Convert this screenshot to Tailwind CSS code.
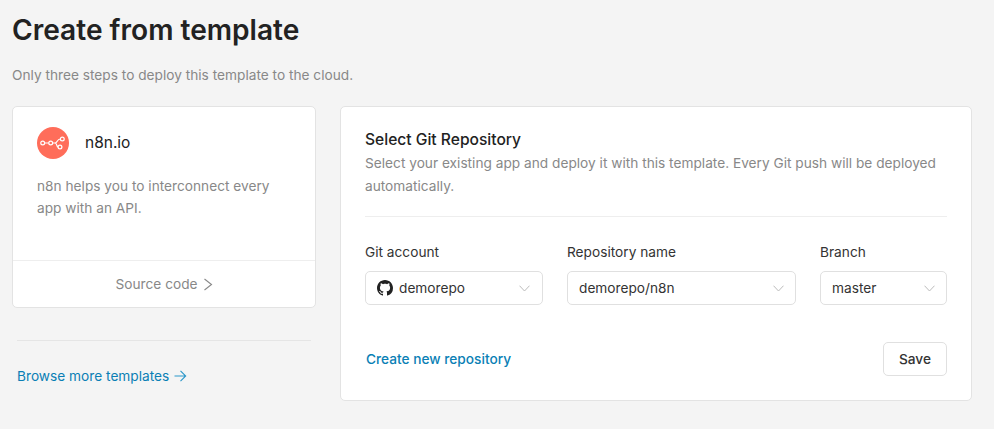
<!DOCTYPE html>
<html>
<head>
<meta charset="utf-8">
<script src="https://cdn.jsdelivr.net/npm/@tailwindcss/browser@4"></script>
</head>
<body class="bg-[#f4f4f4] font-['Inter',sans-serif] w-[994px] h-[429px] overflow-hidden text-[#222]">
<div class="px-3 pt-[12px]">
  <h1 class="text-[28.100px] leading-[36px] font-semibold text-[#222]">Create from template</h1>
  <p class="mt-[17px] text-[13.7px] leading-[20px] text-[#888]">Only three steps to deploy this template to the cloud.</p>
  <div class="flex items-start gap-6 mt-[21px]">
    <div class="w-[304px] shrink-0">
      <div class="bg-white border border-[#e3e3e3] rounded-[5px] h-[202px] flex flex-col">
        <div class="flex-1 px-6 pt-5">
          <div class="flex items-center gap-4">
            <span class="w-8 h-8 rounded-full bg-[#ff6d5a] flex items-center justify-center">
              <svg width="28" height="28" viewBox="0 0 28 28" fill="none" stroke="#fff" stroke-width="1.2"><circle cx="3.700" cy="14" r="1.900"/><circle cx="11.700" cy="14" r="1.900"/><circle cx="23.300" cy="10" r="1.900"/><circle cx="21" cy="18" r="1.900"/><path d="M5.600 14h4.200M13.600 14h2.400c2.800 0 1.600-4 5.400-4M16 14c2.300 0 1.400 4 3.100 4"/></svg>
            </span>
            <span class="text-[15.500px] font-normal text-[#222]">n8n.io</span>
          </div>
          <p class="mt-4 text-[13.7px] leading-[22px] text-[#888]">n8n helps you to interconnect every app with an API.</p>
        </div>
        <div class="h-[47px] pt-px border-t border-[#eee] flex items-center justify-center gap-[5px] text-[13.7px] text-[#888]">
          <span>Source code</span>
          <svg width="10" height="14" viewBox="0 0 10 14" fill="none" stroke="#888" stroke-width="1.100"><path d="M1.500 1 8.500 6.500l-7 5.500"/></svg>
        </div>
      </div>
      <div class="mx-[5px] mt-[32px] border-t border-[#e5e5e5] pt-[25px] flex items-center gap-[5px] text-[13.7px] leading-[20px] text-[#0a7fb5]">
        <span>Browse more templates</span>
        <svg width="13" height="12" viewBox="0 0 13 12" fill="none" stroke="#2b97c9" stroke-width="1.100"><path d="M0.500 6h11M6.500 0.800 11.700 6l-5.200 5.200"/></svg>
      </div>
    </div>
    <div class="w-[632px] h-[295px] bg-white border border-[#e3e3e3] rounded-[5px] px-6 pt-[23px]">
      <h2 class="text-[15.600px] leading-[20px] font-medium text-[#222]">Select Git Repository</h2>
      <p class="mt-[2px] text-[13.7px] leading-[23px] text-[#888]">Select your existing app and deploy it with this template. Every Git push will be deployed automatically.</p>
      <div class="mt-[18px] border-t border-[#eee] pt-[26px] flex gap-6">
        <div class="w-[178px]">
          <div class="text-[13.7px] leading-[18px] text-[#333]">Git account</div>
          <div class="mt-[10px] h-[34px] border border-[#e0e0e0] rounded-[5px] px-[11px] flex items-center gap-[6px] text-[13.7px] text-[#333]">
            <svg width="16" height="16" viewBox="0 0 16 16" fill="#222"><path d="M8 0C3.580 0 0 3.580 0 8c0 3.540 2.290 6.530 5.470 7.590.4.070.55-.17.55-.38 0-.19-.01-.82-.01-1.490-2.010.37-2.530-.49-2.690-.94-.09-.23-.48-.94-.82-1.130-.28-.15-.68-.52-.01-.53.63-.01 1.080.58 1.230.82.720 1.210 1.870.87 2.330.66.070-.52.280-.87.510-1.070-1.780-.2-3.640-.89-3.640-3.950 0-.87.310-1.590.820-2.150-.08-.2-.36-1.020.08-2.120 0 0 .67-.21 2.200.82.640-.18 1.320-.27 2-.27s1.360.09 2 .27c1.530-1.040 2.200-.82 2.200-.82.440 1.100.16 1.920.08 2.120.51.560.82 1.270.82 2.150 0 3.070-1.870 3.750-3.650 3.950.29.25.54.73.54 1.480 0 1.070-.01 1.930-.01 2.200 0 .21.15.46.55.38A8.010 8.010 0 0 0 16 8c0-4.420-3.580-8-8-8z"/></svg>
            <span class="flex-1">demorepo</span>
            <svg class="mr-px" width="11" height="7" viewBox="0 0 11 7" fill="none" stroke="#bbb" stroke-width="1"><path d="M.5.700 5.500 6l5-5.300"/></svg>
          </div>
        </div>
        <div class="w-[229px]">
          <div class="text-[13.7px] leading-[18px] text-[#333]">Repository name</div>
          <div class="mt-[10px] h-[34px] border border-[#e0e0e0] rounded-[5px] px-[11px] flex items-center text-[13.7px] text-[#333]">
            <span class="flex-1">demorepo/n8n</span>
            <svg width="11" height="7" viewBox="0 0 11 7" fill="none" stroke="#bbb" stroke-width="1"><path d="M.5.700 5.500 6l5-5.300"/></svg>
          </div>
        </div>
        <div class="w-[127px]">
          <div class="text-[13.7px] leading-[18px] text-[#333]">Branch</div>
          <div class="mt-[10px] h-[34px] border border-[#e0e0e0] rounded-[5px] px-[11px] flex items-center text-[13.7px] text-[#333]">
            <span class="flex-1">master</span>
            <svg width="11" height="7" viewBox="0 0 11 7" fill="none" stroke="#bbb" stroke-width="1"><path d="M.5.700 5.500 6l5-5.300"/></svg>
          </div>
        </div>
      </div>
      <div class="mt-[37px] flex items-center justify-between pl-px">
        <span class="text-[13.7px] font-medium text-[#0a7fb5]">Create new repository</span>
        <span class="w-[64px] h-[34px] border border-[#e0e0e0] rounded-[5px] flex items-center justify-center text-[13.7px] font-medium text-[#333]">Save</span>
      </div>
    </div>
  </div>
</div>
</body>
</html>
